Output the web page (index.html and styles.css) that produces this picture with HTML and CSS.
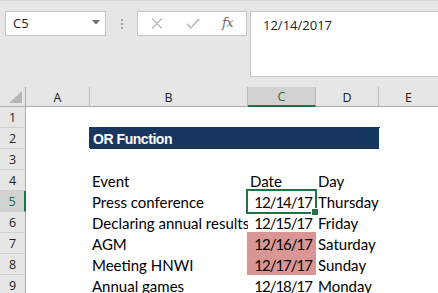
FILE: index.html
```html
<!DOCTYPE html>
<html>
<head>
<meta charset="utf-8">
<link rel="stylesheet" href="styles.css">
</head>
<body>
<div class="app">
  <div class="toolbar">
    <div class="namebox">
      <span class="ref">C5</span>
      <svg class="caret" width="8" height="5" viewBox="0 0 8 5"><path d="M0 0H8L4 4.5Z" fill="#6e6e6e"/></svg>
    </div>
    <div class="dots"><i></i><i></i><i></i></div>
    <div class="fbtns">
      <svg class="ico-x" width="12" height="11" viewBox="0 0 12 11"><path d="M1 0.5L11 10.5M11 0.5L1 10.5" stroke="#b9b9b9" stroke-width="1.4" fill="none"/></svg>
      <svg class="ico-ok" width="14" height="11" viewBox="0 0 14 11"><path d="M0.8 5.6L4.8 9.8L13.2 0.8" stroke="#c3c3c3" stroke-width="1.9" fill="none"/></svg>
      <span class="fx">fx</span>
    </div>
    <div class="fbar">12/14/2017</div>
  </div>
  <div class="sheet">
    <div class="corner"><svg width="13" height="12" viewBox="0 0 13 12"><path d="M13 0V12H0Z" fill="#b6b6b6"/></svg></div>
    <div class="ch">A</div>
    <div class="ch">B</div>
    <div class="ch sel">C</div>
    <div class="ch">D</div>
    <div class="ch last">E</div>

    <div class="rh">1</div><div class="c"></div><div class="c"></div><div class="c"></div><div class="c"></div><div class="c"></div>

    <div class="rh">2</div><div class="c"></div><div class="c title">OR Function</div><div class="c"></div>

    <div class="rh">3</div><div class="c"></div><div class="c"></div><div class="c"></div><div class="c"></div><div class="c"></div>

    <div class="rh">4</div><div class="c"></div><div class="c">Event</div><div class="c">Date</div><div class="c">Day</div><div class="c"></div>

    <div class="rh rsel">5</div><div class="c"></div><div class="c">Press conference</div><div class="c num active">12/14/17</div><div class="c">Thursday</div><div class="c"></div>

    <div class="rh">6</div><div class="c"></div><div class="c">Declaring annual results</div><div class="c num">12/15/17</div><div class="c">Friday</div><div class="c"></div>

    <div class="rh">7</div><div class="c"></div><div class="c">AGM</div><div class="c num pink top">12/16/17</div><div class="c">Saturday</div><div class="c"></div>

    <div class="rh">8</div><div class="c"></div><div class="c">Meeting HNWI</div><div class="c num pink">12/17/17</div><div class="c">Sunday</div><div class="c"></div>

    <div class="rh">9</div><div class="c"></div><div class="c">Annual games</div><div class="c num">12/18/17</div><div class="c">Monday</div><div class="c"></div>
  </div>
</div>
</body>
</html>
```

FILE: styles.css
```css
* { box-sizing: border-box; }
html, body { margin: 0; padding: 0; }
body {
  width: 438px;
  height: 293px;
  overflow: hidden;
  background: #e6e6e6;
  font-family: "Open Sans", "DejaVu Sans", sans-serif;
}
.app { width: 438px; }

.toolbar {
  height: 87px;
  border-top: 1px solid #d4d4d4;
  display: flex;
  align-items: flex-start;
  padding-top: 10px;
}
.namebox {
  margin-left: 5px;
  width: 101px;
  height: 25px;
  background: #fff;
  border: 1px solid #c6c6c6;
  display: flex;
  align-items: center;
  justify-content: space-between;
  padding: 0 5px 0 7px;
}
.ref { font-size: 13px; color: #222; line-height: 1; }
.caret { margin-top: -2px; }
.dots {
  width: 31px;
  height: 25px;
  display: flex;
  flex-direction: column;
  align-items: center;
  justify-content: center;
  gap: 2px;
}
.dots i { display: block; width: 2px; height: 2px; background: #a9a9a9; }
.fbtns {
  width: 110px;
  height: 25px;
  background: #fff;
  border: 1px solid #c6c6c6;
  display: flex;
  align-items: center;
  padding-left: 13px;
}
.ico-x { margin-top: 0; }
.ico-ok { margin-left: 23px; }
.fx {
  margin-left: 22px;
  font-family: "DejaVu Serif", "Liberation Serif", serif;
  font-style: italic;
  font-size: 13px;
  color: #6a6a6a;
  letter-spacing: -0.5px;
  margin-top: -3px;
}
.fbar {
  margin-left: 3px;
  flex: 1;
  height: 66px;
  background: #fff;
  border: 1px solid #c6c6c6;
  border-right: none;
  padding: 4px 0 0 12px;
  font-size: 13px;
  color: #222;
}

.sheet {
  display: grid;
  grid-template-columns: 26px 64px 158px 68px 63px 1fr;
  grid-template-rows: 20px repeat(9, 21px);
  background: #fff;
}
.corner {
  background: #e6e6e6;
  border-right: 1px solid #ababab;
  border-bottom: 1px solid #ababab;
  display: flex;
  align-items: flex-end;
  justify-content: flex-end;
  padding: 0 3px 3px 0;
}
.corner svg { display: block; }
.ch {
  background: #e6e6e6;
  border-right: 1px solid #bdbdbd;
  border-bottom: 1px solid #ababab;
  display: flex;
  align-items: center;
  justify-content: center;
  font-size: 12.5px;
  color: #222;
  padding-top: 1px;
}
.ch.last { border-right: none; }
.ch.sel {
  background: #d2d2d2;
  color: #1d6b40;
  border-bottom: 2px solid #217346;
}
.rh {
  background: #e6e6e6;
  border-right: 1px solid #ababab;
  border-bottom: 1px solid #d0d0d0;
  display: flex;
  align-items: center;
  justify-content: center;
  font-size: 12.5px;
  color: #222;
}
.rh.rsel {
  background: #d2d2d2;
  color: #1d6b40;
  border-right: 2px solid #217346;
}
.c {
  position: relative;
  background: #fff;
  white-space: nowrap;
  overflow: hidden;
  font-family: Lato, "Open Sans", sans-serif;
  font-size: 15px;
  color: #000;
  padding: 0 0 1px 2px;
  line-height: 18px;
  display: flex;
  align-items: flex-end;
}
.c.num { justify-content: flex-end; padding: 0 4px 1px 0; letter-spacing: -1px; }
.c.title {
  grid-column: 3 / 6;
  background: #17375e;
  color: #fff;
  font-family: "Liberation Sans", Arial, sans-serif;
  font-weight: bold;
  font-size: 14px;
  letter-spacing: -0.45px;
  padding-left: 3px;
  padding-bottom: 1px;
  box-shadow: 0 -1px 0 #17375e, -1px -1px 0 #17375e, 1px -1px 0 #17375e;
}
.c.pink { background: #da9694; box-shadow: -1px 0 0 #da9694; }
.c.pink.top { box-shadow: -1px 0 0 #da9694, 0 -1px 0 #da9694, -1px -1px 0 #da9694; }
.c.active { overflow: visible; z-index: 2; }
.c.active::after {
  content: "";
  position: absolute;
  left: -2px;
  top: -2px;
  right: -1px;
  bottom: -2px;
  border: 2px solid #217346;
  pointer-events: none;
}
.c.active::before {
  content: "";
  position: absolute;
  right: -2px;
  bottom: -3px;
  width: 6px;
  height: 6px;
  background: #217346;
  border: 1px solid #fff;
  border-right: none;
  border-bottom: none;
  z-index: 3;
}
```
